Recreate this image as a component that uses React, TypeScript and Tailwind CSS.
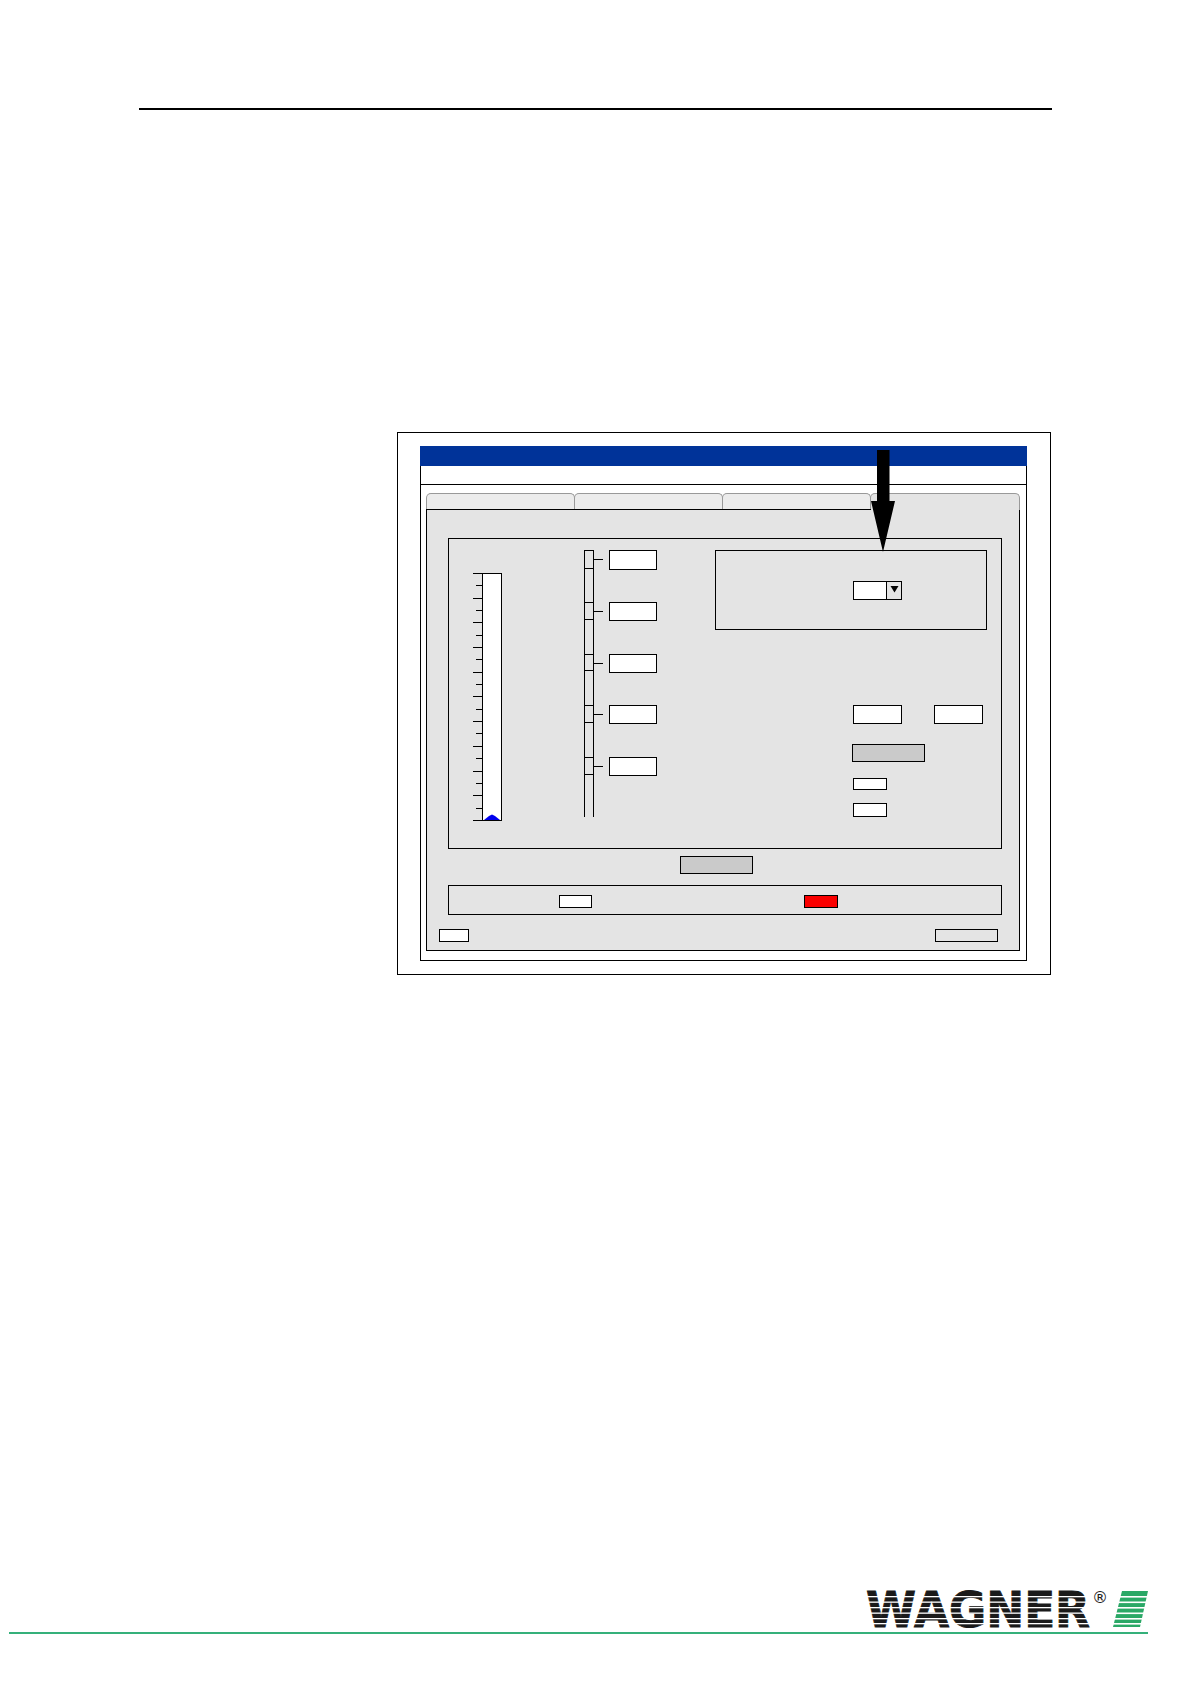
const tickRows = Array.from({ length: 21 }, (_, i) => i)
const ladderRows = [
  { id: 'a', rung: 'h-[19px]', box: 'h-[20px]', rowH: 'h-[52px]' },
  { id: 'b', rung: 'h-[18px]', box: 'h-[19px]', rowH: 'h-[52px]' },
  { id: 'c', rung: 'h-[17px]', box: 'h-[19px]', rowH: 'h-[51px]' },
  { id: 'd', rung: 'h-[18px]', box: 'h-[19px]', rowH: 'h-[52px]' },
  { id: 'e', rung: 'h-[18px]', box: 'h-[19px]', rowH: 'h-[60px]' },
]

function Gauge() {
  return (
    <div className="flex ml-[24px] mt-[34px] h-[248px]">
      <div className="flex flex-col justify-between items-end w-[9px]">
        {tickRows.map(i => (
          <div key={i} className={`h-px bg-black ${i % 2 === 0 ? 'w-[9px]' : 'w-[6px]'}`} />
        ))}
      </div>
      <div className="relative w-[20px] border border-black bg-white">
        <svg className="absolute left-0 bottom-0" width="18" height="6" viewBox="0 0 18 6">
          <path d="M1 6 L6 2 L9 0.5 L12 2 L17 6 Z" fill="#0000ee" />
        </svg>
      </div>
    </div>
  )
}

function Ladder() {
  return (
    <div className="flex flex-col ml-[82px] mt-[11px]">
      {ladderRows.map(row => (
        <div key={row.id} className={`flex items-start ${row.rowH}`}>
          <div className="w-[10px] h-full border-x border-black">
            <div className={`border-y border-black ${row.rung}`} />
          </div>
          <div className="w-[9px] h-px bg-black mt-[9px]" />
          <div className={`w-[48px] ml-[6px] border border-black bg-white ${row.box}`} />
        </div>
      ))}
    </div>
  )
}

function RightColumn() {
  return (
    <div className="flex flex-col ml-[58px] mt-[11px]">
      <div className="w-[272px] h-[80px] border border-black pl-[137px] pt-[30px]">
        <div className="flex w-[49px] h-[19px] border border-black bg-white">
          <div className="w-[32px]" />
          <div className="flex-1 flex items-start justify-center pt-[4px] border-l border-black bg-[#e4e4e4]">
            <svg width="9" height="7" viewBox="0 0 9 7">
              <path d="M0.5 0 H8.5 L4.5 6.5 Z" fill="#000" />
            </svg>
          </div>
        </div>
      </div>
      <div className="flex ml-[138px] mt-[75px] gap-[32px]">
        <div className="w-[49px] h-[19px] border border-black bg-white" />
        <div className="w-[49px] h-[19px] border border-black bg-white" />
      </div>
      <div className="w-[73px] h-[18px] ml-[137px] mt-[20px] border border-black bg-[#cacaca]" />
      <div className="w-[34px] h-[12px] ml-[138px] mt-[16px] border border-black bg-white" />
      <div className="w-[34px] h-[14px] ml-[138px] mt-[13px] border border-black bg-white" />
    </div>
  )
}

function AppWindow() {
  return (
    <div className="w-[607px] h-[515px] flex flex-col border-x border-b border-black">
      <div className="h-[20px] -mx-px bg-[#003399] shrink-0" />
      <div className="h-[19px] border-b border-black bg-white shrink-0" />
      <div className="flex-1 flex flex-col pl-[5px] pr-[6px] pt-[8px] pb-[9px]">
        <div className="flex h-[17px] shrink-0">
          {[0, 1, 2].map(i => (
            <div key={i} className={`w-[149px] border-t border-x border-[#999999] rounded-t-[5px] bg-[#ececec] relative ${i > 0 ? '-ml-px' : ''}`}>
              <div className="absolute -left-px -right-px bottom-0 h-px bg-black" />
            </div>
          ))}
          <div className="flex-1 -ml-px border-t border-x border-[#999999] rounded-t-[5px] bg-[#e4e4e4]" />
        </div>
        <div className="flex-1 flex flex-col border-x border-b border-black bg-[#e4e4e4]">
          <div className="w-[554px] h-[311px] ml-[21px] mt-[28px] flex border border-black shrink-0">
            <Gauge />
            <Ladder />
            <RightColumn />
          </div>
          <div className="w-[73px] h-[18px] ml-[253px] mt-[7px] border border-black bg-[#cacaca]" />
          <div className="w-[554px] h-[30px] ml-[21px] mt-[11px] flex border border-black pt-[9px]">
            <div className="w-[33px] h-[13px] ml-[110px] border border-black bg-white" />
            <div className="w-[34px] h-[13px] ml-[212px] border border-black bg-[#fa0000]" />
          </div>
          <div className="flex justify-between pl-[12px] pr-[21px] mt-[14px]">
            <div className="w-[30px] h-[13px] border border-black bg-white" />
            <div className="w-[63px] h-[13px] border border-black bg-[#e4e4e4]" />
          </div>
        </div>
      </div>
    </div>
  )
}

function WagnerLogo() {
  const bands = [6, 11.5, 17, 22.5, 28, 33]
  return (
    <svg width="283" height="42" viewBox="0 0 283 42" className="block overflow-visible">
      <text
        x="0"
        y="37"
        textLength="224"
        lengthAdjust="spacingAndGlyphs"
        fontFamily="'DejaVu Sans', sans-serif"
        fontWeight="700"
        fontSize="50"
        stroke="#1a1a1a"
        strokeWidth="1"
        fill="#1a1a1a"
      >
        WAGNER
      </text>
      {bands.map(y => (
        <rect key={y} x="0" y={y} width="226" height="1.3" fill="#fff" />
      ))}
      <text x="226" y="13" fontFamily="'DejaVu Sans', sans-serif" fontSize="16" fill="#1a1a1a">
        ®
      </text>
      <path d="M256 1 H282 L274 37 H247 Z" fill="#2aa866" />
      {bands.map(y => (
        <rect key={y} x="245" y={y} width="40" height="1.6" fill="#fff" />
      ))}
    </svg>
  )
}

export default function App() {
  return (
    <div className="relative w-[1190px] h-[1684px] bg-white overflow-hidden">
      <div className="ml-[139px] pt-[108px]">
        <div className="w-[913px] h-[2px] bg-black" />
      </div>
      <div className="relative ml-[397px] mt-[322px] w-[654px] h-[543px] border border-black pl-[22px] pt-[13px]">
        <AppWindow />
        <svg className="absolute left-[472px] top-[17px]" width="26" height="103" viewBox="0 0 26 103">
          <path d="M7 0 H19.5 V51 H25 L13 102 L1 51 H7 Z" fill="#000" />
        </svg>
      </div>
      <div className="ml-[866px] mt-[615px]">
        <WagnerLogo />
      </div>
      <div className="ml-[9px] w-[1139px] h-[2px] bg-[#35b07a]" />
    </div>
  )
}
